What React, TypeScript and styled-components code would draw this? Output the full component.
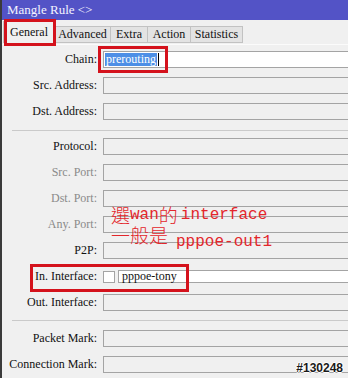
import React from 'react';
import styled, { createGlobalStyle } from 'styled-components';

const GlobalStyle = createGlobalStyle`
  html, body {
    margin: 0;
    padding: 0;
    background: #f0f0f0;
  }
  body {
    font-family: "Liberation Serif", "Noto Sans CJK TC", serif;
  }
`;

const Window = styled.div`
  position: relative;
  width: 348px;
  height: 378px;
  overflow: hidden;
  background: #f0f0f0;
  border-left: 2px solid #3a3a3a;
  box-sizing: border-box;
  display: flex;
  flex-direction: column;
`;

const TitleBar = styled.div`
  height: 20px;
  background: #5353c6;
  color: #f4f4ff;
  font-size: 13px;
  line-height: 20px;
  padding-left: 5px;
  flex-shrink: 0;
`;

const TabStrip = styled.div`
  height: 25px;
  display: flex;
  align-items: flex-end;
  padding-left: 1px;
  box-sizing: border-box;
  border-bottom: 1px solid #fbfbfb;
  flex-shrink: 0;
`;

const Tab = styled.div<{ $w: number; $active?: boolean }>`
  width: ${p => p.$w}px;
  height: ${p => (p.$active ? 22 : 17)}px;
  box-sizing: border-box;
  display: flex;
  align-items: center;
  justify-content: center;
  font-size: 12px;
  color: #111;
  background: ${p => (p.$active ? '#f0f0f0' : '#e3e3e3')};
  border: 1px solid #c2c2c2;
  border-bottom: ${p => (p.$active ? 'none' : '1px solid #c2c2c2')};
  margin-left: ${p => (p.$active ? 0 : -1)}px;
  margin-bottom: 1px;
`;

const Content = styled.div`
  padding-top: 6px;
  display: flex;
  flex-direction: column;
`;

const Group = styled.div`
  display: flex;
  flex-direction: column;
  gap: 9px;
`;

const Row = styled.div`
  display: flex;
  align-items: center;
  height: 17px;
`;

const Label = styled.div<{ $disabled?: boolean }>`
  width: 95px;
  margin-right: 6px;
  text-align: right;
  font-size: 12px;
  white-space: nowrap;
  color: ${p => (p.$disabled ? '#8a8a8a' : '#111')};
`;

const Field = styled.div<{ $white?: boolean }>`
  flex: 1;
  height: 17px;
  margin-right: -20px;
  box-sizing: border-box;
  background: ${p => (p.$white ? '#ffffff' : '#f0f0f0')};
  border: 1px solid #a4a4a4;
  display: flex;
  align-items: center;
  padding-left: 1px;
`;

const Selected = styled.span`
  background: #4d8fe6;
  color: #fff;
  font-size: 12px;
  line-height: 13px;
  padding: 0 1px;
`;

const Caret = styled.span`
  width: 1px;
  height: 13px;
  background: #000;
  margin-left: 1px;
`;

const Check = styled.div`
  width: 12px;
  height: 12px;
  box-sizing: border-box;
  background: #fff;
  border: 1px solid #a4a4a4;
  margin-right: 3px;
  flex-shrink: 0;
`;

const SmallField = styled(Field)`
  height: 13px;
  padding-left: 3px;
  font-size: 12px;
  color: #111;
`;

const Separator = styled.div<{ $top: number; $bottom: number }>`
  height: 1px;
  background: #cacaca;
  margin: ${p => p.$top}px 0 ${p => p.$bottom}px 10px;
`;

const RedBox = styled.div<{ $x: number; $y: number; $w: number; $h: number }>`
  position: absolute;
  left: ${p => p.$x}px;
  top: ${p => p.$y}px;
  width: ${p => p.$w}px;
  height: ${p => p.$h}px;
  border: 3px solid #d4121c;
  box-sizing: border-box;
  pointer-events: none;
`;

const Note = styled.div`
  position: absolute;
  left: 109px;
  top: 205px;
  color: #e3262b;
  font-family: "Liberation Mono", "Noto Sans CJK TC", monospace;
  font-size: 16px;
  line-height: 20px;
`;

const NoteLine = styled.div`
  display: flex;
  align-items: flex-start;
  height: 20px;
  white-space: pre;
`;

const Han = styled.span`
  display: inline-block;
  height: 20px;
  overflow: visible;
  font-family: "Noto Sans CJK TC", sans-serif;
  font-size: 19px;
  font-weight: 300;
  line-height: 20px;
`;

const Latin = styled.span<{ $drop?: number; $gap?: number }>`
  margin-top: ${p => p.$drop || 0}px;
  margin-left: ${p => p.$gap || 0}px;
`;

const Watermark = styled.div`
  position: absolute;
  right: 5px;
  bottom: 3px;
  font-family: "Liberation Sans", sans-serif;
  font-weight: 700;
  font-size: 12px;
  color: #1a1a1a;
  text-shadow: -1px 0 #fff, 1px 0 #fff, 0 -1px #fff, 0 1px #fff;
`;

const topRows = [
  { label: 'Src. Address:' },
  { label: 'Dst. Address:' },
];

const midRows = [
  { label: 'Protocol:', disabled: false },
  { label: 'Src. Port:', disabled: true },
  { label: 'Dst. Port:', disabled: true },
  { label: 'Any. Port:', disabled: true },
  { label: 'P2P:', disabled: false },
];

const tabs = [
  { name: 'General', w: 52, active: true },
  { name: 'Advanced', w: 57 },
  { name: 'Extra', w: 38 },
  { name: 'Action', w: 44 },
  { name: 'Statistics', w: 53 },
];

function App() {
  return (
    <>
      <GlobalStyle />
      <Window>
        <TitleBar>Mangle Rule &lt;&gt;</TitleBar>
        <TabStrip>
          {tabs.map(t => (
            <Tab key={t.name} $w={t.w} $active={t.active}>{t.name}</Tab>
          ))}
        </TabStrip>

        <Content>
          <Group>
            <Row>
              <Label>Chain:</Label>
              <Field $white>
                <Selected>prerouting</Selected>
                <Caret />
              </Field>
            </Row>
            {topRows.map(r => (
              <Row key={r.label}>
                <Label>{r.label}</Label>
                <Field />
              </Row>
            ))}
          </Group>

          <Separator $top={10} $bottom={7} />

          <Group>
            {midRows.map(r => (
              <Row key={r.label}>
                <Label $disabled={r.disabled}>{r.label}</Label>
                <Field />
              </Row>
            ))}
            <Row>
              <Label>In. Interface:</Label>
              <Check />
              <SmallField $white>pppoe-tony</SmallField>
            </Row>
            <Row>
              <Label>Out. Interface:</Label>
              <Field />
            </Row>
          </Group>

          <Separator $top={9} $bottom={9} />

          <Group>
            <Row>
              <Label>Packet Mark:</Label>
              <Field />
            </Row>
            <Row>
              <Label>Connection Mark:</Label>
              <Field />
            </Row>
          </Group>
        </Content>

        <RedBox $x={2} $y={19} $w={52} $h={27} />
        <RedBox $x={96} $y={46} $w={70} $h={27} />
        <RedBox $x={28} $y={264} $w={159} $h={28} />

        <Note>
          <NoteLine>
            <Han>選</Han>
            <Latin>wan</Latin>
            <Han>的</Han>
            <Latin $gap={3}>interface</Latin>
          </NoteLine>
          <NoteLine>
            <Han>一般是</Han>
            <Latin $drop={7} $gap={8}>pppoe-out1</Latin>
          </NoteLine>
        </Note>

        <Watermark>#130248</Watermark>
      </Window>
    </>
  );
}

export default App;
